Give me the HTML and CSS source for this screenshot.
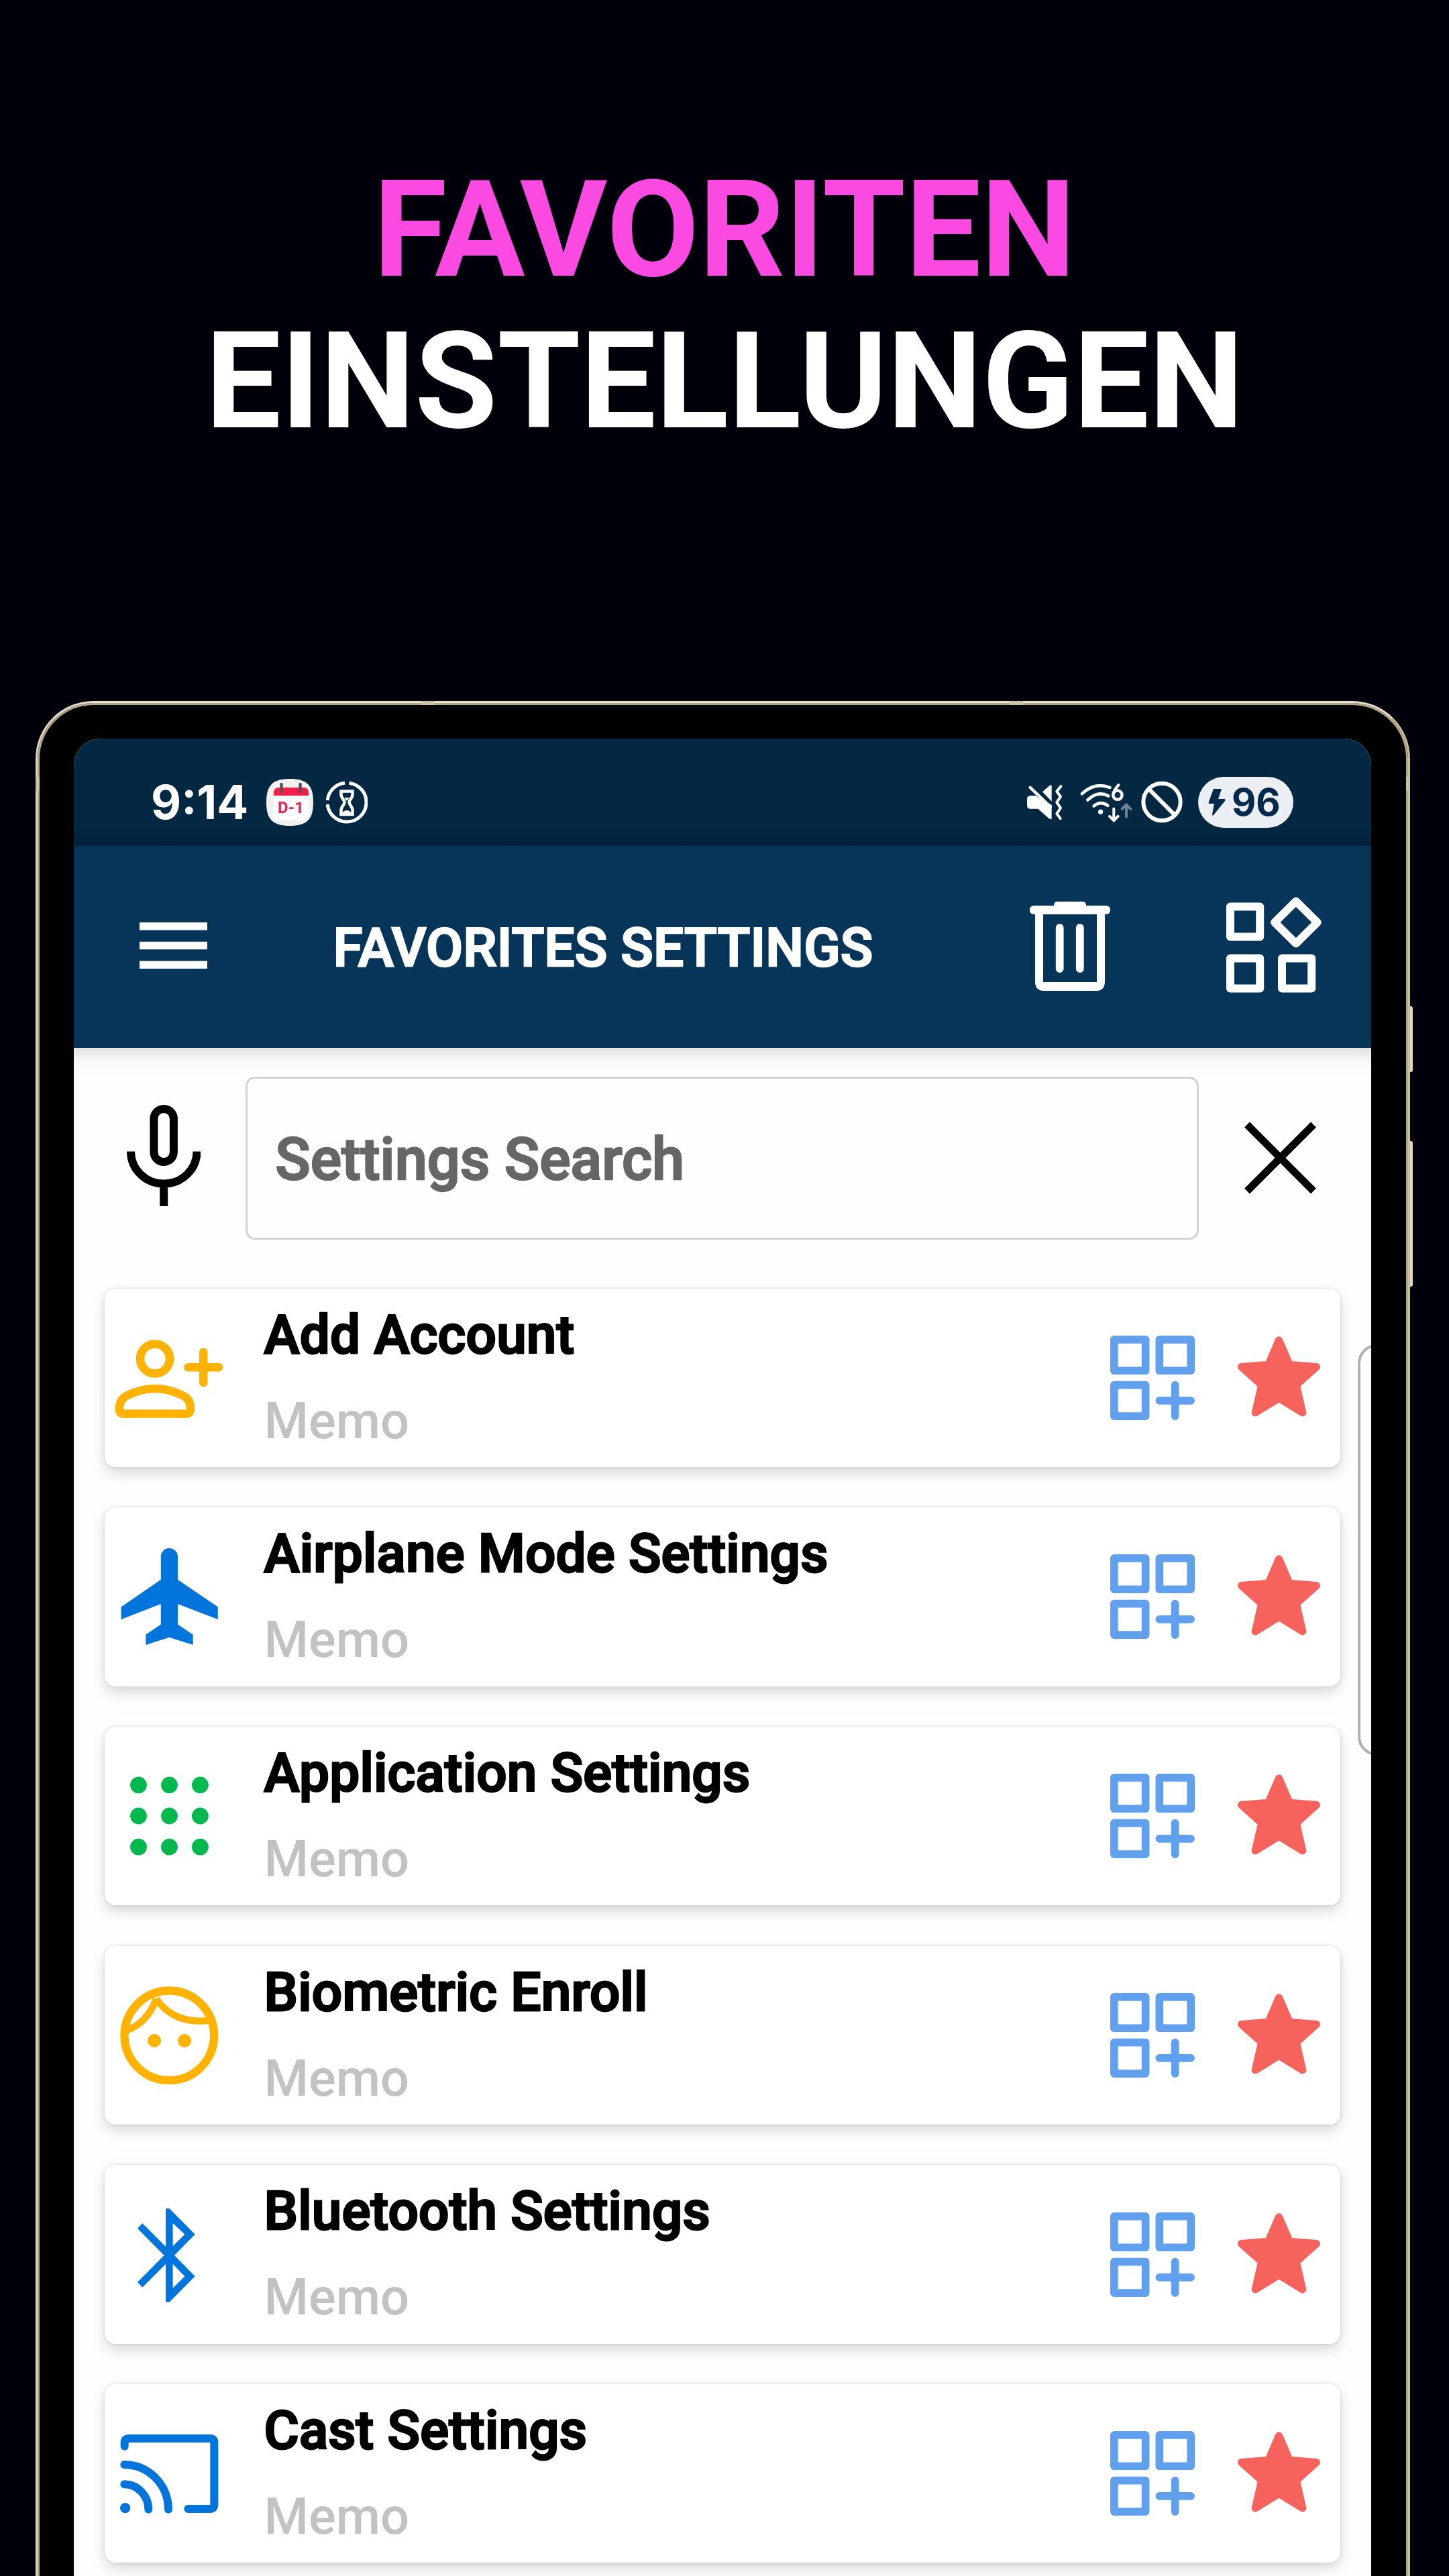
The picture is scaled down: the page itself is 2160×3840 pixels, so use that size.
FILE: index.html
```html
<!DOCTYPE html>
<html lang="de">
<head>
<meta charset="utf-8">
<title>Favoriten Einstellungen</title>
<link rel="stylesheet" href="styles.css">
</head>
<body>
<svg class="defs" width="0" height="0" aria-hidden="true">
  <symbol id="qr-add" viewBox="0 0 126 126">
    <g fill="none" stroke="#60a0ed" stroke-width="11.7" stroke-linejoin="round" stroke-linecap="round">
      <rect x="5.85" y="5.85" width="46.8" height="46.4"/>
      <rect x="73.35" y="5.85" width="46.8" height="46.4"/>
      <rect x="5.85" y="73.7" width="46.8" height="46.4"/>
      <path d="M96.7 73.7v46.4M73.35 96.9h46.8"/>
    </g>
  </symbol>
  <symbol id="star" viewBox="0 0 123 126">
    <path d="M61.5 6.8L45.7 43.2L5.5 46.6L35.6 73.6L26.2 115L61.5 93.4L96.8 115L87.4 73.6L117.5 46.6L77.3 43.2Z" fill="#f6625c" stroke="#f6625c" stroke-width="11" stroke-linejoin="round"/>
  </symbol>
</svg>

<header class="headline">
  <div class="accent">FAVORITEN</div>
  <div>EINSTELLUNGEN</div>
</header>

<main class="phone">
  <i class="band band-tl"></i><i class="band band-tr"></i><i class="band band-l"></i><i class="band band-r"></i>
  <i class="key key-power"></i><i class="key key-volume"></i>
  <div class="screen">
    <div class="status">
      <span class="time">9:14</span>
      <svg class="st-cal" viewBox="0 0 70 70">
        <path d="M35 0C60 0 70 9 70 35S60 70 35 70S0 61 0 35S10 0 35 0Z" fill="#f1f1f1"/>
        <path d="M11 22h52v34a6 6 0 0 1-6 6H17a6 6 0 0 1-6-6Z" fill="#fff"/>
        <path d="M11 25v-5a7 7 0 0 1 7-7h38a7 7 0 0 1 7 7v5Z" fill="#f02048"/>
        <path d="M22.500 8v11M50.500 8v11" stroke="#55505a" stroke-width="4.500" stroke-linecap="round"/>
        <text x="36.500" y="51" class="cal-text" text-anchor="middle">D-1</text>
      </svg>
      <svg class="st-glass" viewBox="0 0 62 64" fill="none" stroke="#fff">
        <path d="M34.500 3.200A29 29 0 1 1 2.200 35M2.200 29A29 29 0 0 1 28 3.200" stroke-width="5"/>
        <path d="M22.500 15.500h17v5c0 5-5 8-5 11.500s5 6.500 5 11.500v6.500h-17v-6.500c0-5 5-8 5-11.500s-5-6.500-5-11.500Z" stroke-width="4.500"/>
        <path d="M25 50v-3c2-4 10-4 12 0v3ZM27 25h8l-4 5Z" fill="#fff" stroke="none"/>
      </svg>
      <svg class="st-mute" viewBox="60 37.500 165 228">
        <path d="M78 122L104 122L165 178V228H172L112 181H78Q63 181 63 166V137Q63 122 78 122ZM132 104L166 75H173V148ZM95 122L173 163V228H166L112 181Z" fill="#fff"/>
        <path d="M77 85L168 172" stroke="#fff" stroke-width="13" stroke-linecap="round"/>
        <path d="M214 80L196 103L213 126L196 151L213 177L196 202L212 224" fill="none" stroke="#fff" stroke-width="12" stroke-linejoin="round" stroke-linecap="round"/>
      </svg>
      <svg class="st-wifi" viewBox="300 37.500 235 228">
        <g fill="none" stroke="#fff" stroke-width="14" stroke-linecap="round">
          <path d="M309 113Q365 60 433 85"/>
          <path d="M334 141Q380 98 427 123"/>
          <path d="M362 168Q392 143 424 166"/>
          <path d="M451 180V229M432 214L451 233L470 214" stroke-width="12"/>
          <path d="M507 215V166M488 181L507 162L526 181" stroke="#728494" stroke-width="12"/>
          <circle cx="468" cy="119" r="20" stroke-width="13"/>
          <path d="M448 116Q450 100 472 74" stroke-width="13"/>
        </g>
        <circle cx="392" cy="194" r="11" fill="#fff"/>
      </svg>
      <svg class="st-ban" viewBox="570 37.500 192 228" fill="none" stroke="#fff" stroke-width="18">
        <circle cx="666" cy="150" r="83"/><path d="M607 91L724 209"/>
      </svg>
      <div class="battery">
        <svg viewBox="0 0 26 42"><path d="M8 1h12l-5 15h9q2 0 1 3L8 40q-2 2-2-1l3-16H2q-2 0-1-3Z" fill="#05294a"/></svg>
        <span>96</span>
      </div>
    </div>

    <div class="appbar">
      <svg class="menu" viewBox="0 0 101 69"><path d="M0 5.700h101M0 34.500h101M0 63.300h101" stroke="#fff" stroke-width="11.400"/></svg>
      <h1>FAVORITES SETTINGS</h1>
      <svg class="trash" viewBox="0 0 120 133">
        <path d="M41 0h38q5 0 5 6h30q6 0 6 6.500t-6 6.500h-2v100q0 14-13 14H21q-13 0-13-14V19H6q-6 0-6-6.500T6 6h30q0-6 5-6ZM20 19v101h80V19Z" fill="#fff" fill-rule="evenodd"/>
        <path d="M44.700 39v61M74.800 39v61" stroke="#fff" stroke-width="11.800" stroke-linecap="round"/>
      </svg>
      <svg class="widgets" viewBox="0 0 142 143" fill="none" stroke="#fff" stroke-width="12" stroke-linejoin="round">
        <path d="M6 14.500h44.200v45H6ZM6 91.500h44.200v45H6ZM83 91.500h44.200v45H83ZM103.900 6.500L135.700 38L103.900 69.500L72.100 38Z"/>
      </svg>
    </div>

    <div class="content">
      <div class="search">
        <svg class="mic" viewBox="0 0 110 158" fill="none" stroke="#000" stroke-width="12">
          <rect x="40.400" y="6" width="29.500" height="79" rx="14.750"/>
          <path d="M6 69.500a49.200 48 0 0 0 98.500 0M55.200 118v33"/>
        </svg>
        <div class="field">Settings Search</div>
        <svg class="close" viewBox="0 0 107 108"><path d="M4 4.500L103 103.500M103 4.500L4 103.500" stroke="#000" stroke-width="11"/></svg>
      </div>

      <ul class="list">
        <li class="card">
          <svg class="icon" viewBox="0 0 170 170" fill="none" stroke="#ffb300" stroke-width="12.500" stroke-linecap="round" stroke-linejoin="round">
            <circle cx="61" cy="56.500" r="22"/>
            <path d="M8 130Q8 117 20 111Q61 91 102 111Q114 117 114 130V132Q114 138.500 108 138.500H14Q8 138.500 8 132Z"/>
            <path d="M133.200 46.500v45.500M110.500 69.300h45.500"/>
          </svg>
          <div class="text"><h2>Add Account</h2><p>Memo</p></div>
          <svg class="qr"><use href="#qr-add"/></svg><svg class="star"><use href="#star"/></svg>
        </li>
        <li class="card">
          <svg class="icon" viewBox="0 0 170 170"><path d="M69.800 59.700V25.400A12.600 12.600 0 0 1 95 25.400V59.700L154.800 100.500V119L95 96V126.600L117.700 141.800V156.900L82.500 145.800L47.300 156.900V141.800L69.800 126.600V96L10.500 119V100.500Z" fill="#0275dc"/></svg>
          <div class="text"><h2>Airplane Mode Settings</h2><p>Memo</p></div>
          <svg class="qr"><use href="#qr-add"/></svg><svg class="star"><use href="#star"/></svg>
        </li>
        <li class="card">
          <svg class="icon" viewBox="0 0 170 170" stroke="#00b94e" stroke-width="24.800" stroke-linecap="round"><path d="M36.500 38.900h0M82.500 38.900h0M128.400 38.900h0M36.500 85h0M82.500 85h0M128.400 85h0M36.500 131.200h0M82.500 131.200h0M128.400 131.200h0"/></svg>
          <div class="text"><h2>Application Settings</h2><p>Memo</p></div>
          <svg class="qr"><use href="#qr-add"/></svg><svg class="star"><use href="#star"/></svg>
        </li>
        <li class="card">
          <svg class="icon" viewBox="0 -3 510 510" fill="none" stroke="#ffb300">
            <circle cx="247" cy="253" r="200.500" stroke-width="37"/>
            <path d="M188 90Q150 195 56 230M188 88C245 170 325 198 435 185" stroke-width="31"/>
            <circle cx="180" cy="276" r="30" fill="#ffb300" stroke="none"/><circle cx="315" cy="276" r="30" fill="#ffb300" stroke="none"/>
          </svg>
          <div class="text"><h2>Biometric Enroll</h2><p>Memo</p></div>
          <svg class="qr"><use href="#qr-add"/></svg><svg class="star"><use href="#star"/></svg>
        </li>
        <li class="card">
          <svg class="icon" viewBox="0 0 510 510"><path d="M231 49h17L362 164L270 258L362 352L248 467H231V297L127 401L105 378L224 258L105 138L127 115L231 219ZM263 114V217L316 164ZM263 297V404L316 352Z" fill="#0275dc" fill-rule="evenodd"/></svg>
          <div class="text"><h2>Bluetooth Settings</h2><p>Memo</p></div>
          <svg class="qr"><use href="#qr-add"/></svg><svg class="star"><use href="#star"/></svg>
        </li>
        <li class="card">
          <svg class="icon" viewBox="0 -23 510 510" fill="none" stroke="#0275dc" stroke-width="36" stroke-linecap="round">
            <path d="M47 111V95Q47 76 66 76H430Q448 76 448 94V372Q448 391 430 391H331M46 193A198 200 0 0 1 243 393M46 281A109 112 0 0 1 154 393"/>
            <circle cx="50" cy="387" r="23" fill="#0275dc" stroke="none"/>
          </svg>
          <div class="text"><h2>Cast Settings</h2><p>Memo</p></div>
          <svg class="qr"><use href="#qr-add"/></svg><svg class="star"><use href="#star"/></svg>
        </li>
      </ul>
    </div>
    <i class="edge-handle"></i>
  </div>
</main>
</body>
</html>
```
FILE: styles.css
```css
* { box-sizing: border-box; margin: 0; padding: 0; }

body {
  width: 2160px;
  height: 3840px;
  overflow: hidden;
  background: #00000a;
  font-family: Roboto, sans-serif;
}

svg { display: block; flex: none; }
.defs { position: absolute; }

.headline {
  height: 1045px;
  padding-top: 230px;
  text-align: center;
  font-size: 200px;
  font-weight: 700;
  line-height: 226px;
  color: #fff;
}
.headline .accent { color: #fa4ae2; }

/* Device body */
.phone {
  position: relative;
  width: 2049px;
  height: 2900px;
  margin-left: 53px;
  padding: 50px 55px 0 54px;
  border: 3px solid #c9bda0;
  border-top-color: #e9dfd6;
  border-left-color: #ddd4c1;
  border-radius: 86px 86px 0 0;
  background: #000;
  box-shadow: inset 0 0 0 3px #b3a684;
}

.band { position: absolute; background: #cbbfa6; }
.band-tl { left: 572px; top: -3px; width: 20px; height: 6px; }
.band-tr { left: 1449px; top: -3px; width: 20px; height: 6px; }
.band-l { left: -3px; top: 110px; width: 6px; height: 21px; }
.band-r { right: -3px; top: 110px; width: 6px; height: 21px; }

.key { position: absolute; right: -7px; width: 4px; background: #ddd5c2; border-radius: 0 3px 3px 0; }
.key-power { top: 452px; height: 98px; }
.key-volume { top: 653px; height: 217px; }

.screen {
  position: relative;
  height: 2800px;
  margin-top: 3px;
  overflow: hidden;
  border-radius: 40px 40px 0 0;
  background: #fefefe;
}

/* Status bar */
.status {
  display: flex;
  align-items: center;
  height: 160px;
  padding: 29px 116px 0 115px;
  background: linear-gradient(#042742 85%, #04203c);
  color: #fff;
  font-family: Inter, sans-serif;
  font-weight: 700;
}
.time { font-size: 69.500px; line-height: 76px; width: 143px; white-space: nowrap; }
.st-cal { width: 70px; height: 70px; margin-left: 29px; }
.cal-text { font: 700 24px Roboto, sans-serif; fill: #e8274f; }
.st-glass { width: 62px; height: 64px; margin: 0 auto 0 19px; }
.st-mute { width: 55px; height: 76px; }
.st-wifi { width: 78.300px; height: 76px; margin-left: 25px; }
.st-ban { width: 64px; height: 76px; margin: 0 22px 0 11.700px; }
.battery {
  display: flex;
  align-items: center;
  gap: 9px;
  width: 142px;
  height: 76px;
  padding-left: 15px;
  border-radius: 38px;
  background: #ebeff3;
  color: #05294a;
  font-size: 56px;
  line-height: 76px;
}
.battery svg { width: 26px; height: 42px; }

/* App bar */
.appbar {
  display: flex;
  align-items: center;
  height: 301px;
  padding: 0 74px 0 97.500px;
  background: #073459;
  color: #fff;
}
.menu { width: 101px; height: 69px; margin-bottom: 4px; }
.appbar h1 {
  flex: 1;
  margin: 2px 0 0 188px;
  font-size: 80px;
  font-weight: 500;
  line-height: 94px;
  letter-spacing: .15px;
  white-space: nowrap;
  -webkit-text-stroke: 2.600px #fff;
}
.trash { width: 120px; height: 133px; margin: 0 173.500px 2px 0; }
.widgets { width: 142px; height: 143px; margin-bottom: 6px; }

/* Content */
.content { background: linear-gradient(#e2e2e2, #f8f8f8 20px, #fefefe 42px); }
.search {
  display: flex;
  align-items: center;
  padding: 42.600px 81px 73px 79.300px;
}
.mic { width: 110px; height: 158px; }
.field {
  width: 1421.500px;
  height: 243px;
  margin: 0 68px 0 66.500px;
  padding-left: 41.500px;
  border: 3.500px solid #d2d2d2;
  border-radius: 14px;
  background: #fefefe;
  color: #666;
  font-size: 86.500px;
  font-weight: 500;
  line-height: 242px;
  white-space: nowrap;
  -webkit-text-stroke: 2.400px #666;
}
.close { width: 107px; height: 108px; }

.list {
  display: flex;
  flex-direction: column;
  gap: 60.300px;
  padding: 0 46px 0 45.500px;
  list-style: none;
}
.card {
  display: flex;
  align-items: center;
  height: 266.400px;
  padding: 0 30px 0 14.500px;
  border-radius: 16px;
  background: #fff;
  box-shadow: 0 9px 20px rgba(0, 0, 0, .15), 0 0 5px rgba(0, 0, 0, .12);
}
.icon { width: 170px; height: 170px; }
.text {
  flex: 1;
  align-self: flex-start;
  padding: 22px 0 0 53.500px;
  white-space: nowrap;
}
.text h2 {
  font-size: 80px;
  font-weight: 500;
  line-height: 94px;
  letter-spacing: .2px;
  color: #000;
  -webkit-text-stroke: 2.800px #000;
}
.text p {
  margin-top: 36px;
  font-size: 76px;
  font-weight: 500;
  line-height: 90px;
  color: #c2c2c2;
}
.qr { width: 126px; height: 126px; margin-right: 64px; }
.star { width: 123px; height: 126px; }

/* Edge panel handle, cut by the screen's side */
.edge-handle {
  position: absolute;
  left: 1913.500px;
  top: 903px;
  width: 60px;
  height: 613px;
  border: 4px solid #b0b0b0;
  border-radius: 28px;
  background: #fefefe;
}
```
